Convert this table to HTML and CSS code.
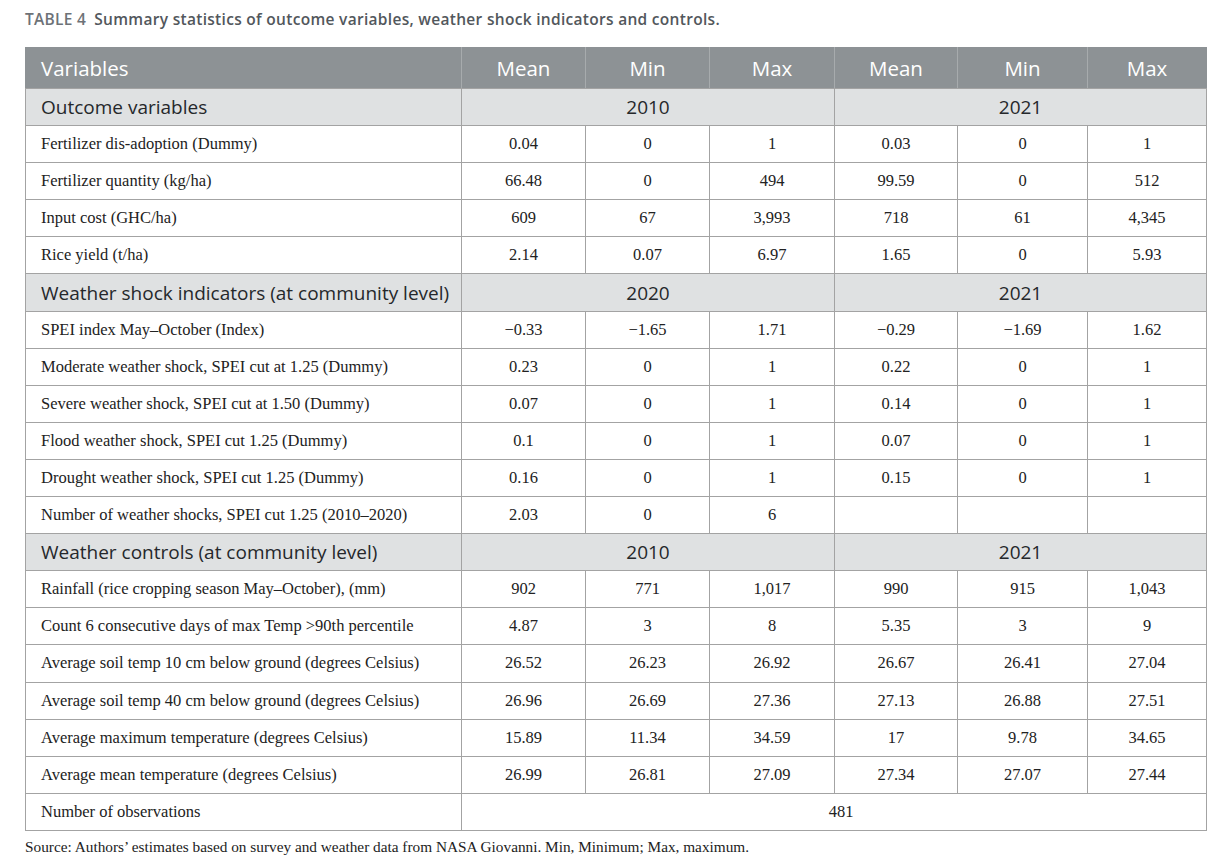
FILE: index.html
```html
<!DOCTYPE html>
<html>
<head>
<meta charset="utf-8">
<link rel="stylesheet" href="styles.css">
</head>
<body>
<div class="wrap">
<h1 class="title"><span class="lbl">TABLE 4</span><span class="cap">Summary statistics of outcome variables, weather shock indicators and controls.</span></h1>
<table class="tbl">
<colgroup>
<col class="c-var"><col class="c-a"><col class="c-a"><col class="c-b"><col class="c-c"><col class="c-d"><col class="c-e">
</colgroup>
<thead>
<tr class="head"><th class="left">Variables</th><th>Mean</th><th>Min</th><th>Max</th><th>Mean</th><th>Min</th><th>Max</th></tr>
</thead>
<tbody>
<tr class="sec"><td class="left">Outcome variables</td><td colspan="3">2010</td><td colspan="3">2021</td></tr>
<tr><td class="left">Fertilizer dis-adoption (Dummy)</td><td>0.04</td><td>0</td><td>1</td><td>0.03</td><td>0</td><td>1</td></tr>
<tr><td class="left">Fertilizer quantity (kg/ha)</td><td>66.48</td><td>0</td><td>494</td><td>99.59</td><td>0</td><td>512</td></tr>
<tr><td class="left">Input cost (GHC/ha)</td><td>609</td><td>67</td><td>3,993</td><td>718</td><td>61</td><td>4,345</td></tr>
<tr><td class="left">Rice yield (t/ha)</td><td>2.14</td><td>0.07</td><td>6.97</td><td>1.65</td><td>0</td><td>5.93</td></tr>
<tr class="sec"><td class="left">Weather shock indicators (at community level)</td><td colspan="3">2020</td><td colspan="3">2021</td></tr>
<tr><td class="left">SPEI index May–October (Index)</td><td>−0.33</td><td>−1.65</td><td>1.71</td><td>−0.29</td><td>−1.69</td><td>1.62</td></tr>
<tr><td class="left">Moderate weather shock, SPEI cut at 1.25 (Dummy)</td><td>0.23</td><td>0</td><td>1</td><td>0.22</td><td>0</td><td>1</td></tr>
<tr><td class="left">Severe weather shock, SPEI cut at 1.50 (Dummy)</td><td>0.07</td><td>0</td><td>1</td><td>0.14</td><td>0</td><td>1</td></tr>
<tr><td class="left">Flood weather shock, SPEI cut 1.25 (Dummy)</td><td>0.1</td><td>0</td><td>1</td><td>0.07</td><td>0</td><td>1</td></tr>
<tr><td class="left">Drought weather shock, SPEI cut 1.25 (Dummy)</td><td>0.16</td><td>0</td><td>1</td><td>0.15</td><td>0</td><td>1</td></tr>
<tr><td class="left">Number of weather shocks, SPEI cut 1.25 (2010–2020)</td><td>2.03</td><td>0</td><td>6</td><td></td><td></td><td></td></tr>
<tr class="sec"><td class="left">Weather controls (at community level)</td><td colspan="3">2010</td><td colspan="3">2021</td></tr>
<tr><td class="left">Rainfall (rice cropping season May–October), (mm)</td><td>902</td><td>771</td><td>1,017</td><td>990</td><td>915</td><td>1,043</td></tr>
<tr><td class="left">Count 6 consecutive days of max Temp &gt;90th percentile</td><td>4.87</td><td>3</td><td>8</td><td>5.35</td><td>3</td><td>9</td></tr>
<tr><td class="left">Average soil temp 10 cm below ground (degrees Celsius)</td><td>26.52</td><td>26.23</td><td>26.92</td><td>26.67</td><td>26.41</td><td>27.04</td></tr>
<tr><td class="left">Average soil temp 40 cm below ground (degrees Celsius)</td><td>26.96</td><td>26.69</td><td>27.36</td><td>27.13</td><td>26.88</td><td>27.51</td></tr>
<tr><td class="left">Average maximum temperature (degrees Celsius)</td><td>15.89</td><td>11.34</td><td>34.59</td><td>17</td><td>9.78</td><td>34.65</td></tr>
<tr><td class="left">Average mean temperature (degrees Celsius)</td><td>26.99</td><td>26.81</td><td>27.09</td><td>27.34</td><td>27.07</td><td>27.44</td></tr>
<tr><td class="left">Number of observations</td><td colspan="6" class="obs">481</td></tr>
</tbody>
</table>
<p class="note">Source: Authors’ estimates based on survey and weather data from NASA Giovanni. Min, Minimum; Max, maximum.</p>
</div>
</body>
</html>
```

FILE: styles.css
```css
html, body {
  margin: 0;
  padding: 0;
  background: #ffffff;
}
.wrap {
  padding: 8px 12px 0 25px;
}
.title {
  margin: 0;
  font-family: "Open Sans", "Noto Sans", sans-serif;
  font-size: 15.5px;
  font-weight: 600;
  line-height: 22px;
  letter-spacing: 0.3px;
  color: #5d6166;
}
.title .lbl {
  font-weight: 600;
  color: #6d7277;
  margin-right: 8px;
}
.title .cap {
  color: #52575c;
}
.tbl {
  margin-top: 17px;
  width: 1181px;
  border-collapse: collapse;
  table-layout: fixed;
}
.c-var { width: 436px; }
.c-a { width: 124px; }
.c-b { width: 125px; }
.c-c { width: 123px; }
.c-d { width: 130px; }
.c-e { width: 119px; }
.tbl td, .tbl th {
  border: 1px solid #a3a3a3;
  text-align: center;
  padding: 0 4px;
}
.tbl th.left, .tbl td.left {
  text-align: left;
  padding-left: 15px;
}
.tbl td.obs {
  padding-left: 18px;
}
.head th {
  background: #8d9295;
  color: #ffffff;
  font-family: "Open Sans", "Noto Sans", sans-serif;
  font-weight: 400;
  font-size: 20.5px;
  height: 40px;
  border-top-color: #8d9295;
  border-left-color: #8d9295;
  border-right-color: #a7abad;
  border-bottom-color: #a3a3a3;
}
.head th:last-child {
  border-right-color: #8d9295;
}
.sec td {
  background: #dfe1e2;
  color: #25282b;
  font-family: "Open Sans", "Noto Sans", sans-serif;
  font-size: 19px;
}
.tbl tbody tr td {
  height: 36.1px;
}
.tbl tbody tr:not(.sec) td {
  font-family: "Liberation Serif", "Times New Roman", serif;
  font-size: 16.5px;
  color: #222222;
}
.note {
  margin: 7px 0 0 0;
  font-family: "Liberation Serif", "Times New Roman", serif;
  font-size: 15.3px;
  color: #222222;
}
```
